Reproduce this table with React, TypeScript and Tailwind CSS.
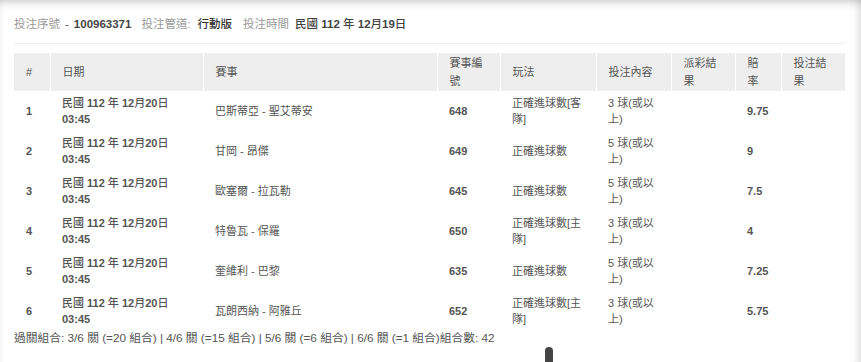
import React from 'react'

type Row = {
  no: number
  date: string
  time: string
  match: string
  code: string
  play: string[]
  pick: string[]
  odds: string
}

const rows: Row[] = [
  { no: 1, date: '民國 112 年 12月20日', time: '03:45', match: '巴斯蒂亞 - 聖艾蒂安', code: '648', play: ['正確進球數[客', '隊]'], pick: ['3 球(或以', '上)'], odds: '9.75' },
  { no: 2, date: '民國 112 年 12月20日', time: '03:45', match: '甘岡 - 昂傑', code: '649', play: ['正確進球數'], pick: ['5 球(或以', '上)'], odds: '9' },
  { no: 3, date: '民國 112 年 12月20日', time: '03:45', match: '歐塞爾 - 拉瓦勒', code: '645', play: ['正確進球數'], pick: ['5 球(或以', '上)'], odds: '7.5' },
  { no: 4, date: '民國 112 年 12月20日', time: '03:45', match: '特魯瓦 - 保羅', code: '650', play: ['正確進球數[主', '隊]'], pick: ['3 球(或以', '上)'], odds: '4' },
  { no: 5, date: '民國 112 年 12月20日', time: '03:45', match: '奎維利 - 巴黎', code: '635', play: ['正確進球數'], pick: ['5 球(或以', '上)'], odds: '7.25' },
  { no: 6, date: '民國 112 年 12月20日', time: '03:45', match: '瓦朗西納 - 阿雅丘', code: '652', play: ['正確進球數[主', '隊]'], pick: ['3 球(或以', '上)'], odds: '5.75' },
]

// bold digits, but keep the chinese glyphs at a lighter weight like the original page
function Mixed({ text }: { text: string }) {
  const parts = text.split(/([\u4e00-\u9fff]+)/)
  return (
    <>
      {parts.map((p, i) =>
        /[\u4e00-\u9fff]/.test(p) ? (
          <span key={i} className="font-medium">{p}</span>
        ) : (
          <span key={i} className="font-bold">{p}</span>
        )
      )}
    </>
  )
}

function Lines({ items }: { items: string[] }) {
  return (
    <>
      {items.map((t, i) => (
        <span key={i} className="block whitespace-nowrap">{t}</span>
      ))}
    </>
  )
}

export default function App() {
  const th = 'bg-[#eeeeee] border-l border-white first:border-l-0 pl-3 pr-1 text-left align-middle font-normal leading-[18px]'
  const td = 'pl-3 pr-1 align-middle leading-4'

  return (
    <div
      className="h-[362px] w-[861px] overflow-hidden bg-white text-[#555] shadow-[inset_0_10px_9px_-8px_rgba(0,0,0,0.22),inset_-12px_0_10px_-10px_rgba(0,0,0,0.16),inset_6px_0_6px_-6px_rgba(0,0,0,0.08)]"
      style={{ fontFamily: '"Liberation Sans", "Noto Sans CJK TC", sans-serif' }}
    >
      <div className="flex flex-col pl-[14px] pt-[15px] w-[845px]">
        <div className="flex items-center text-[11.5px] leading-[18px] whitespace-nowrap">
          <span className="text-[#999]">投注序號</span>
          <span className="mx-[5px] text-[#555]">-</span>
          <span className="font-bold text-[#444]">100963371</span>
          <span className="ml-[10px] text-[#999]">投注管道:</span>
          <span className="ml-[7px] font-medium text-[#333]">行動版</span>
          <span className="ml-[11px] text-[#999]">投注時間</span>
          <span className="ml-[6px] text-[#444]"><Mixed text="民國 112 年 12月19日" /></span>
        </div>

        <div className="mt-[10px] h-px bg-[#eeeeee]" />

        <table className="mt-[9px] w-[831px] table-fixed border-collapse text-[11px]">
          <thead>
            <tr className="h-[38px] text-[#555]">
              <th className={`${th} w-[36px]`}>#</th>
              <th className={`${th} w-[153px]`}>日期</th>
              <th className={`${th} w-[234px]`}>賽事</th>
              <th className={`${th} w-[63px]`}><Lines items={['賽事編', '號']} /></th>
              <th className={`${th} w-[96px]`}>玩法</th>
              <th className={`${th} w-[75px]`}>投注內容</th>
              <th className={`${th} w-[64px]`}><Lines items={['派彩結', '果']} /></th>
              <th className={`${th} w-[46px]`}><Lines items={['賠', '率']} /></th>
              <th className={`${th} w-[64px]`}><Lines items={['投注結', '果']} /></th>
            </tr>
          </thead>
          <tbody>
            {rows.map((r) => (
              <tr key={r.no} className="h-10">
                <td className={`${td} font-bold`}>{r.no}</td>
                <td className={td}>
                  <span className="block whitespace-nowrap"><Mixed text={r.date} /></span>
                  <span className="block font-bold">{r.time}</span>
                </td>
                <td className={td}>{r.match}</td>
                <td className={`${td} font-bold`}>{r.code}</td>
                <td className={td}><Lines items={r.play} /></td>
                <td className={td}><Lines items={r.pick} /></td>
                <td className={td}></td>
                <td className={`${td} font-bold`}>{r.odds}</td>
                <td className={td}></td>
              </tr>
            ))}
          </tbody>
        </table>

        <div className="text-[11.75px] leading-[14px] whitespace-nowrap">
          過關組合: 3/6 關 (=20 組合) | 4/6 關 (=15 組合) | 5/6 關 (=6 組合) | 6/6 關 (=1 組合)組合數: 42
        </div>

        <div className="ml-[531px] mt-[2px] h-[15px] w-2 rounded-t-full bg-[#444]" />
      </div>
    </div>
  )
}
